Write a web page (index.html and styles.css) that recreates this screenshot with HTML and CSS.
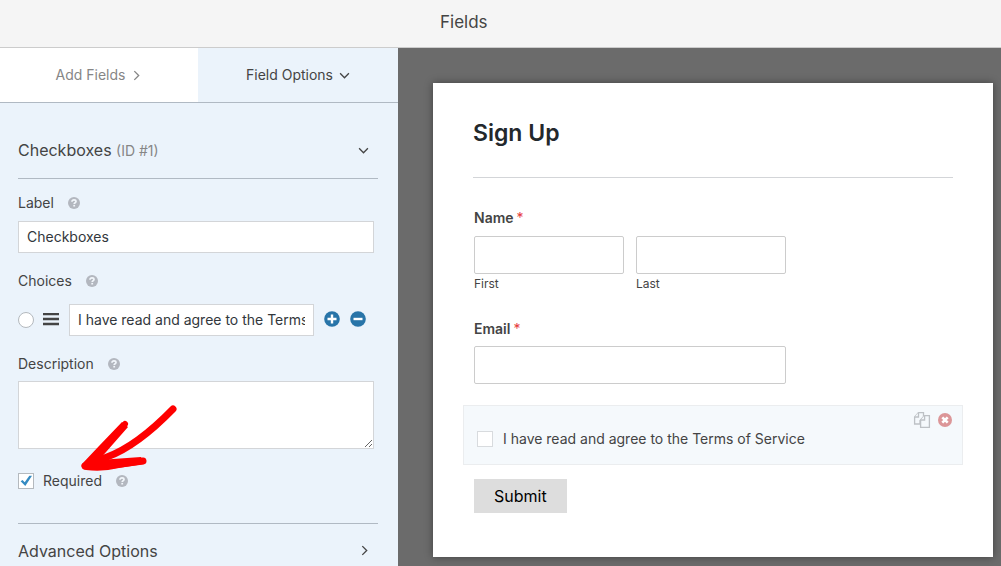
FILE: index.html
```html
<!DOCTYPE html>
<html lang="en">
<head>
<meta charset="utf-8">
<meta name="viewport" content="width=device-width, initial-scale=1">
<title>Fields</title>
<link rel="stylesheet" href="styles.css">
</head>
<body>
<svg class="sprite" aria-hidden="true">
  <symbol id="help" viewBox="0 0 12 12"><circle cx="6" cy="6" r="6" fill="#b3b7bf"/><path d="M4 4.700c0-1.200.8-1.800 2-1.800s2 .6 2 1.600c0 1.200-1.800 1.200-1.800 2.400" fill="none" stroke="#f2f6fb" stroke-width="1.700"/><rect x="5.300" y="7.900" width="1.800" height="1.600" fill="#f2f6fb"/></symbol>
  <symbol id="down" viewBox="0 0 10 10"><path d="M1 3l4 4 4-4" fill="none" stroke="currentColor" stroke-width="1.200"/></symbol>
  <symbol id="right" viewBox="0 0 10 10"><path d="M3 1l4 4-4 4" fill="none" stroke="currentColor" stroke-width="1.200"/></symbol>
</svg>
<header class="topbar"><h1 class="topbar-title">Fields</h1></header>
<div class="builder">
  <aside class="sidebar">
    <nav class="tabs">
      <a class="tab" href="#add">Add Fields <svg class="chevron"><use href="#right"/></svg></a>
      <a class="tab tab-active" href="#options">Field Options <svg class="chevron"><use href="#down"/></svg></a>
    </nav>
    <div class="options">
      <h2 class="group-title"><span>Checkboxes <small class="field-id">(ID #1)</small></span><svg class="chevron"><use href="#down"/></svg></h2>
      <div class="label-row label-row-first"><label for="label">Label</label><svg class="help"><use href="#help"/></svg></div>
      <input class="text-input" id="label" type="text" value="Checkboxes">
      <div class="label-row"><label for="choice">Choices</label><svg class="help"><use href="#help"/></svg></div>
      <div class="choice">
        <input class="radio" type="radio" name="default" aria-label="Default choice">
        <svg class="handle" viewBox="0 0 16 14"><path d="M0 1h16M0 6h16M0 11h16" stroke="#444" stroke-width="2.400"/></svg>
        <input class="text-input choice-input" id="choice" type="text" value="I have read and agree to the Terms of Service">
        <button class="round-button" type="button" aria-label="Add choice"><svg viewBox="0 0 16 16"><circle cx="8" cy="7" r="7.800" fill="#2874a8"/><path d="M3.500 7h9M8 2.500v9" stroke="#fff" stroke-width="2.400"/></svg></button>
        <button class="round-button" type="button" aria-label="Remove choice"><svg viewBox="0 0 16 16"><circle cx="8" cy="7" r="7.800" fill="#2874a8"/><path d="M3.500 7h9" stroke="#fff" stroke-width="2.400"/></svg></button>
      </div>
      <div class="label-row"><label for="description">Description</label><svg class="help"><use href="#help"/></svg></div>
      <textarea class="textarea" id="description"></textarea>
      <div class="required">
        <span class="tick-box"><input class="checkbox" id="required" type="checkbox" checked><svg class="tick" viewBox="0 0 16 16"><path d="M2.600 8.200l2-1.200 2.100 2.200L11.300 2.800h2.700L7.300 13z" fill="#348bc2"/></svg></span>
        <label for="required">Required</label><svg class="help"><use href="#help"/></svg>
        <svg class="arrow" viewBox="0 0 100 72">
          <g fill="none" stroke="#fe0000" stroke-linecap="round" stroke-linejoin="round">
            <path d="M94 7Q58 44 28 55L6 64" stroke-width="7"/>
            <path d="M46 22L22 48 6 64" stroke-width="6"/>
            <path d="M64 59L30 63.500" stroke-width="7"/>
          </g>
          <path d="M43 20L20 44 3 62Q1 67 7 68Q24 70 40 66L65 62 62 55 20 58 49 25z" fill="#fe0000"/>
        </svg>
      </div>
      <h2 class="group-title advanced"><span>Advanced Options</span><svg class="chevron"><use href="#right"/></svg></h2>
    </div>
  </aside>
  <main class="canvas">
    <form class="card">
      <h2 class="form-title">Sign Up</h2>
      <fieldset class="field name-field">
        <legend class="field-label">Name<span class="star">*</span></legend>
        <div class="name-row">
          <div><input class="box" id="first" type="text"><label class="sub-label" for="first">First</label></div>
          <div><input class="box" id="last" type="text"><label class="sub-label" for="last">Last</label></div>
        </div>
      </fieldset>
      <div class="field email-field">
        <label class="field-label" for="email">Email<span class="star">*</span></label>
        <input class="box" id="email" type="email">
      </div>
      <div class="selected">
        <label class="terms"><input class="checkbox" type="checkbox">I have read and agree to the Terms of Service</label>
        <div class="actions">
          <button class="round-button" type="button" aria-label="Duplicate"><svg viewBox="0 0 16 16"><g fill="#f5f9fc" stroke="#bdc1c5" stroke-width="1.300"><path d="M4.500.6h5v4.500L6 8.500V12H.6V5z"/><path d="M.6 5h3.900V.6M10.500 3.600h4.900v11.800H6.600V8z"/><path d="M6.600 8h4V3.600"/></g></svg></button>
          <button class="round-button" type="button" aria-label="Delete"><svg viewBox="0 0 16 16"><circle cx="8" cy="8" r="7" fill="#dc9698"/><path d="M5.300 5.300l5.400 5.400m0-5.400l-5.400 5.400" stroke="#fff" stroke-width="2.600"/></svg></button>
        </div>
      </div>
      <button class="submit" type="submit">Submit</button>
    </form>
  </main>
</div>
</body>
</html>
```
FILE: styles.css
```css
* { box-sizing: border-box; }
body {
  margin: 0;
  height: 100vh;
  display: flex;
  flex-direction: column;
  overflow: hidden;
  font: 14px/20px Inter, "Liberation Sans", sans-serif;
  color: #444;
}
h1, h2 { margin: 0; font-weight: 400; }
input, textarea, button { font: inherit; margin: 0; }
svg { display: block; flex: none; }
.sprite { position: absolute; width: 0; height: 0; }
.topbar {
  flex: none;
  height: 48px;
  padding: 10px 0 0 440px;
  background: #f5f5f5;
  border-bottom: 1px solid #ccc;
}
.topbar-title { font-size: 17px; line-height: 24px; }
.builder { flex: 1; display: flex; min-height: 0; }
.sidebar { flex: 0 0 398px; background: #ebf3fb; }
.tabs { display: grid; grid-template-columns: 198px 1fr; border-bottom: 1px solid #b0b9c3; }
.tab {
  height: 54px;
  display: flex;
  align-items: center;
  justify-content: center;
  gap: 6px;
  background: #fff;
  color: #868686;
  text-decoration: none;
}
.tab-active { background: #ebf3fb; color: #444; }
.chevron { width: 11px; height: 11px; }
.options { padding: 20px 20px 0 18px; }
.group-title {
  display: flex;
  align-items: center;
  justify-content: space-between;
  height: 56px;
  padding-right: 9px;
  border-bottom: 1px solid #b0b9c3;
  font-size: 16px;
}
.field-id { font-size: 14px; color: #868686; }
.label-row { display: flex; align-items: center; gap: 14px; margin: 18px 0 7px; }
.label-row-first { margin: 14px 0 8px; }
.help { width: 12px; height: 12px; }
.text-input {
  display: block;
  width: calc(100% - 4px);
  height: 32px;
  padding: 0 8px 1px;
  border: 1px solid #d3d5d8;
  background: #fff;
  color: #32373c;
}
.choice { display: flex; align-items: center; margin-top: 13px; padding-right: 12px; }
.radio {
  appearance: none;
  flex: none;
  width: 16px;
  height: 16px;
  border: 1px solid #b4b9be;
  border-radius: 50%;
  background: #fff;
}
.handle { width: 16px; height: 14px; margin: 0 10px 0 9px; }
.choice-input { flex: 1; width: auto; min-width: 0; }
.round-button { flex: none; width: 16px; height: 16px; padding: 0; border: 0; background: none; }
.round-button svg { overflow: visible; }
.choice .round-button { margin-left: 10px; }
.textarea {
  display: block;
  width: calc(100% - 4px);
  height: 68px;
  border: 1px solid #d3d5d8;
  background: #fff;
  resize: vertical;
}
.required {
  position: relative;
  display: flex;
  align-items: center;
  padding: 22px 0 32px;
}
.required label { margin: 0 14px 0 9px; }
.tick-box { position: relative; width: 16px; height: 16px; }
.checkbox {
  appearance: none;
  display: block;
  flex: none;
  width: 16px;
  height: 16px;
  border: 1px solid #b4b9be;
  background: #fff;
}
.tick { position: absolute; inset: 0; pointer-events: none; }
.arrow { position: absolute; left: 61px; top: -47px; width: 100px; height: 72px; pointer-events: none; }
.advanced { border-top: 1px solid #b0b9c3; border-bottom: 0; padding-right: 8px; height: 54px; }
.canvas { flex: 1; min-width: 0; padding: 35px 8px 9px 35px; background: #6b6b6b; }
.card {
  height: 100%;
  padding: 34px 30px;
  background: #fff;
  box-shadow: 0 0 8px rgba(0, 0, 0, .4);
}
.form-title {
  margin: 0 10px;
  padding-bottom: 28px;
  border-bottom: 1px solid #d3d5d8;
  color: #23282c;
  font-size: 23px;
  line-height: 32px;
  font-weight: 600;
}
.field { width: 312px; margin: 30px 0 0 11px; padding: 0; border: 0; }
.field-label { display: block; padding: 0; margin-bottom: 8px; font-weight: 600; }
.star { margin-left: 3px; color: #e63b3b; font-weight: 400; }
.name-row { display: grid; grid-template-columns: 1fr 1fr; gap: 12px; }
.box { display: block; width: 100%; height: 38px; border: 1px solid #ccc; border-radius: 2px; background: #fff; }
.sub-label { display: block; font-size: 12px; line-height: 20px; }
.email-field { margin-top: 25px; }
.email-field .field-label { margin-bottom: 7px; }
.selected {
  display: flex;
  justify-content: space-between;
  height: 60px;
  margin: 21px 0 14px;
  padding: 6px 9px 0 13px;
  border: 1px solid #ebedef;
  background: #f5f9fc;
}
.terms { display: flex; align-items: center; gap: 10px; height: 54px; }
.terms .checkbox { border-color: #d8dbde; }
.actions { display: flex; gap: 7px; }
.submit {
  margin-left: 11px;
  height: 34px;
  padding: 0 20px;
  border: 0;
  background: #ddd;
  color: #000;
  font-size: 16px;
}
```
